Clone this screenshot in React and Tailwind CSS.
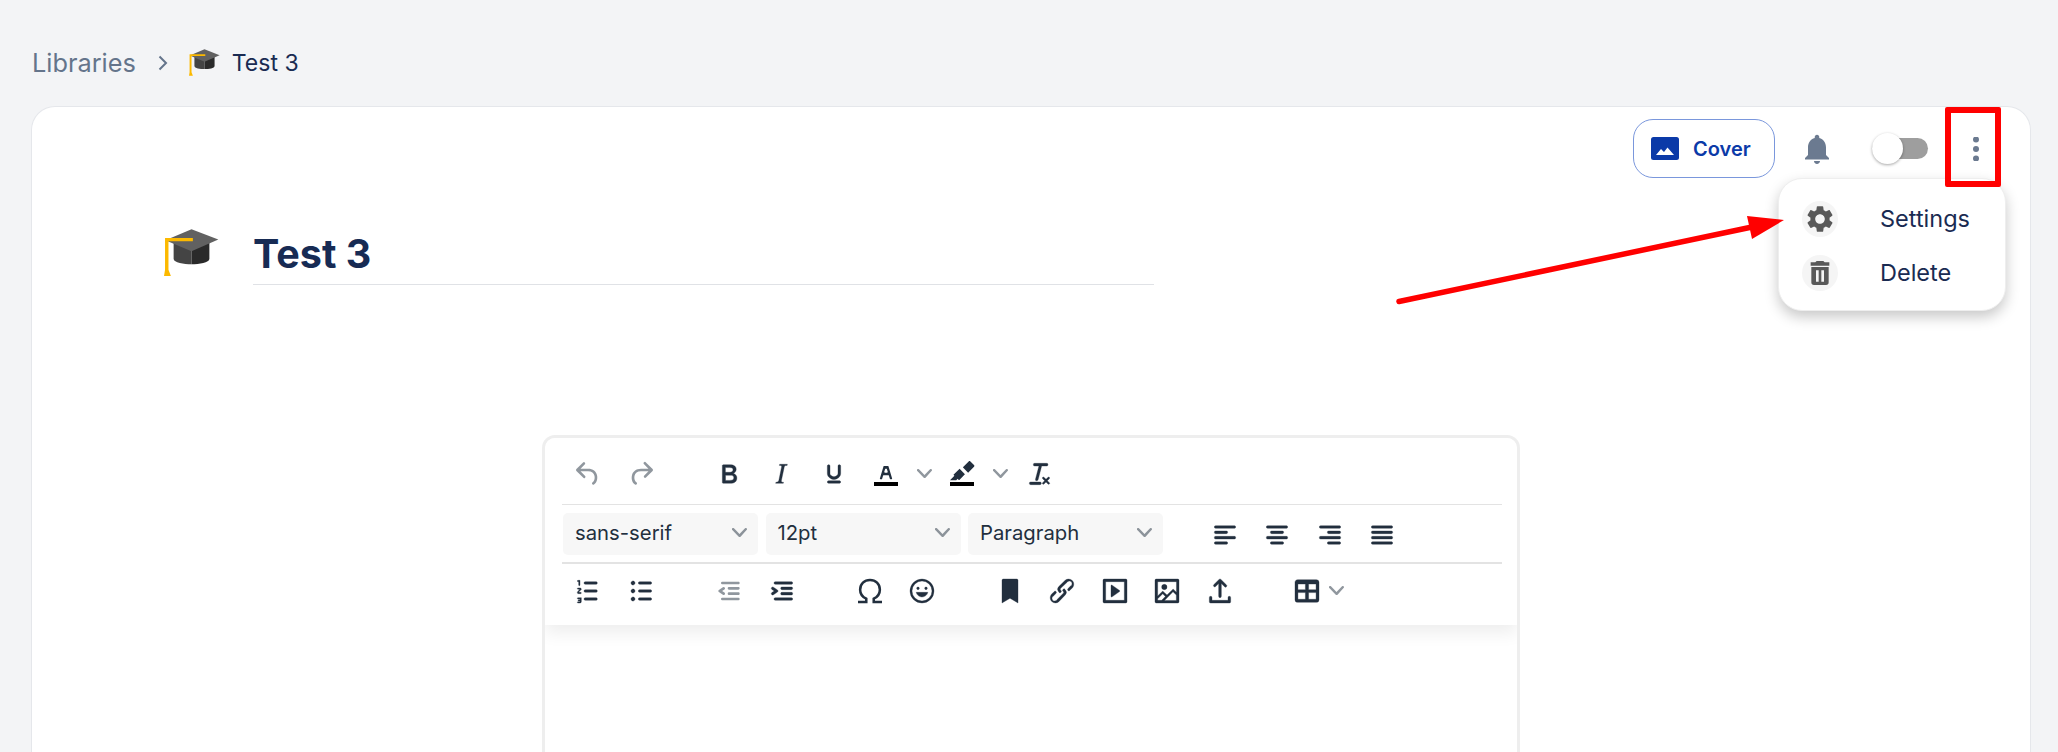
import React from "react";

const font = { fontFamily: "Inter, 'Liberation Sans', sans-serif" };

const P = {
    undo: "M6.4 8H12c3.7 0 6.2 2 6.8 5.1.6 2.7-.4 5.6-2.3 6.8a1 1 0 0 1-1-1.8c1.1-.6 1.8-2.7 1.4-4.6-.5-2.1-2.1-3.5-4.9-3.5H6.4l3.3 3.3a1 1 0 1 1-1.4 1.4l-5-5a1 1 0 0 1 0-1.4l5-5a1 1 0 0 1 1.4 1.4L6.4 8Z",
    redo: "M17.6 10H12c-2.8 0-4.4 1.4-4.9 3.5-.4 2 .3 4 1.4 4.6a1 1 0 1 1-1 1.8c-2-1.2-2.9-4.1-2.3-6.8.6-3 3-5.1 6.8-5.1h5.6l-3.3-3.3a1 1 0 1 1 1.4-1.4l5 5a1 1 0 0 1 0 1.4l-5 5a1 1 0 0 1-1.4-1.4l3.3-3.3Z",
    bold: "M7.8 19c-.3 0-.5 0-.6-.2l-.2-.5V5.7c0-.2 0-.4.2-.5l.6-.2h5c1.5 0 2.7.3 3.5 1 .7.6 1.1 1.4 1.1 2.5a3 3 0 0 1-.6 1.9c-.4.6-1 1-1.6 1.2.4.1.9.3 1.3.6s.8.7 1 1.2c.3.4.4 1 .4 1.6 0 1.3-.4 2.3-1.3 3-.8.7-2 1-3.7 1H7.8Zm5-8.3c.6 0 1.2-.1 1.6-.5.4-.3.6-.7.6-1.3 0-1.1-.8-1.7-2.3-1.7H9.3v3.5h3.4Zm.5 6c.7 0 1.3-.1 1.7-.4.4-.4.6-.9.6-1.5s-.2-1-.7-1.4c-.4-.3-1-.4-2-.4H9.4v3.8h4Z",
    italic: "M16.7 4.7l-.1.9h-.3c-.6 0-1 0-1.4.3-.3.3-.4.6-.5 1.1l-2.1 9.8v.6c0 .5.4.8 1.4.8h.2l-.2.8H8l.2-.8h.2c1.1 0 1.8-.5 2-1.5l2-9.8.1-.5c0-.6-.4-.8-1.4-.8h-.3l.2-.9h5.8Z",
    underline: "M16 5c.6 0 1 .4 1 1v5.5a4 4 0 0 1-.4 1.8l-1 1.4a5.3 5.3 0 0 1-5.5 1 5 5 0 0 1-1.6-1c-.5-.4-.8-.9-1.1-1.4a4 4 0 0 1-.4-1.8V6c0-.6.4-1 1-1s1 .4 1 1v5.5c0 .3 0 .6.2 1l.6.7a3.3 3.3 0 0 0 2.2.8 3.4 3.4 0 0 0 2.2-.8c.3-.2.4-.5.6-.8l.2-.9V6c0-.6.4-1 1-1ZM8 17h8c.6 0 1 .4 1 1s-.4 1-1 1H8a1 1 0 0 1 0-2Z",
    textColor: "M8.7 16h-.8a.5.5 0 0 1-.5-.6l2.7-9c.1-.3.3-.4.5-.4h2.8c.2 0 .4.1.5.4l2.7 9a.5.5 0 0 1-.5.6h-.8a.5.5 0 0 1-.4-.4l-.7-2.2c0-.3-.3-.4-.5-.4h-3.4c-.2 0-.4.1-.5.4l-.7 2.2c0 .3-.2.4-.4.4Zm2.6-7.6-.6 2a.5.5 0 0 0 .5.6h1.6a.5.5 0 0 0 .5-.6l-.6-2c0-.3-.3-.4-.5-.4h-.4c-.2 0-.4.1-.5.4Z",
    highlight: "M7.7 16.7H3l3.3-3.3-.7-.8L10.2 8l4 4.1-4 4.2c-.2.2-.6.2-.8 0l-.7-.7-1 1v.1Zm5-9.7L17 2.6c.4-.4.9-.4 1.3 0L21 5.3c.4.4.4 1 0 1.3l-4.4 4.4-4-4Z",
    clear: "M13.2 6a1 1 0 0 1 0 .2l-2.6 10a1 1 0 0 1-1 .8h-.2a.8.8 0 0 1-.8-1l2.6-10H8a1 1 0 1 1 0-2h9a1 1 0 0 1 0 2h-3.8ZM5 18h7a1 1 0 0 1 0 2H5a1 1 0 0 1 0-2Zm13 1.5L16.5 18 15 19.5a.7.7 0 0 1-1-1l1.5-1.5-1.5-1.5a.7.7 0 0 1 1-1l1.5 1.5 1.5-1.5a.7.7 0 0 1 1 1L17.5 17l1.5 1.5a.7.7 0 0 1-1 1Z",
    alignLeft: "M5 5h14c.6 0 1 .4 1 1s-.4 1-1 1H5a1 1 0 1 1 0-2Zm0 4h8c.6 0 1 .4 1 1s-.4 1-1 1H5a1 1 0 1 1 0-2Zm0 8h8c.6 0 1 .4 1 1s-.4 1-1 1H5a1 1 0 0 1 0-2Zm0-4h14c.6 0 1 .4 1 1s-.4 1-1 1H5a1 1 0 0 1 0-2Z",
    alignCenter: "M5 5h14c.6 0 1 .4 1 1s-.4 1-1 1H5a1 1 0 1 1 0-2Zm3 4h8c.6 0 1 .4 1 1s-.4 1-1 1H8a1 1 0 1 1 0-2Zm0 8h8c.6 0 1 .4 1 1s-.4 1-1 1H8a1 1 0 0 1 0-2Zm-3-4h14c.6 0 1 .4 1 1s-.4 1-1 1H5a1 1 0 0 1 0-2Z",
    alignRight: "M5 5h14c.6 0 1 .4 1 1s-.4 1-1 1H5a1 1 0 1 1 0-2Zm6 4h8c.6 0 1 .4 1 1s-.4 1-1 1h-8a1 1 0 0 1 0-2Zm0 8h8c.6 0 1 .4 1 1s-.4 1-1 1h-8a1 1 0 0 1 0-2Zm-6-4h14c.6 0 1 .4 1 1s-.4 1-1 1H5a1 1 0 0 1 0-2Z",
    justify: "M5 5h14c.6 0 1 .4 1 1s-.4 1-1 1H5a1 1 0 1 1 0-2Zm0 4h14c.6 0 1 .4 1 1s-.4 1-1 1H5a1 1 0 1 1 0-2Zm0 4h14c.6 0 1 .4 1 1s-.4 1-1 1H5a1 1 0 0 1 0-2Zm0 4h14c.6 0 1 .4 1 1s-.4 1-1 1H5a1 1 0 0 1 0-2Z",
    numList: "M10 17h8c.6 0 1 .4 1 1s-.4 1-1 1h-8a1 1 0 0 1 0-2Zm0-6h8c.6 0 1 .4 1 1s-.4 1-1 1h-8a1 1 0 0 1 0-2Zm0-6h8c.6 0 1 .4 1 1s-.4 1-1 1h-8a1 1 0 1 1 0-2ZM6 4v3.5c0 .3-.2.5-.5.5a.5.5 0 0 1-.5-.5V5h-.5a.5.5 0 0 1 0-1H6Zm-1 8.8.2.2h1.3c.3 0 .5.2.5.5s-.2.5-.5.5H4.9a.9.9 0 0 1-.9-.9c0-.2 0-.4.2-.5l1.6-1.9H4.5a.5.5 0 0 1 0-1h1.6c.5 0 .9.4.9.9 0 .2 0 .4-.2.5L5 12.8ZM7 17v3c0 .6-.4 1-1 1H4.5a.5.5 0 0 1 0-1H6v-.5H5a.5.5 0 0 1 0-1h1V18H4.5a.5.5 0 0 1 0-1H6c.6 0 1 0 1 0Z",
    bullList: "M11 5h8c.6 0 1 .4 1 1s-.4 1-1 1h-8a1 1 0 0 1 0-2Zm0 6h8c.6 0 1 .4 1 1s-.4 1-1 1h-8a1 1 0 0 1 0-2Zm0 6h8c.6 0 1 .4 1 1s-.4 1-1 1h-8a1 1 0 0 1 0-2ZM4.5 6c0-.4.1-.8.4-1 .3-.4.7-.5 1.1-.5s.8.1 1 .4c.4.3.5.7.5 1.1s-.1.8-.4 1c-.3.4-.7.5-1.1.5s-.8-.1-1-.4c-.4-.3-.5-.7-.5-1.1Zm0 6c0-.4.1-.8.4-1 .3-.4.7-.5 1.1-.5s.8.1 1 .4c.4.3.5.7.5 1.1s-.1.8-.4 1c-.3.4-.7.5-1.1.5s-.8-.1-1-.4c-.4-.3-.5-.7-.5-1.1Zm0 6c0-.4.1-.8.4-1 .3-.4.7-.5 1.1-.5s.8.1 1 .4c.4.3.5.7.5 1.1s-.1.8-.4 1c-.3.4-.7.5-1.1.5s-.8-.1-1-.4c-.4-.3-.5-.7-.5-1.1Z",
    outdent: "M7 5h12c.6 0 1 .4 1 1s-.4 1-1 1H7a1 1 0 1 1 0-2Zm5 4h7c.6 0 1 .4 1 1s-.4 1-1 1h-7a1 1 0 0 1 0-2Zm0 4h7c.6 0 1 .4 1 1s-.4 1-1 1h-7a1 1 0 0 1 0-2Zm-5 4h12a1 1 0 0 1 0 2H7a1 1 0 0 1 0-2Zm1.6-3.8a1 1 0 0 1-1.2 1.6l-3-2a1 1 0 0 1 0-1.6l3-2a1 1 0 0 1 1.2 1.6L6.8 12l1.8 1.2Z",
    indent: "M7 5h12c.6 0 1 .4 1 1s-.4 1-1 1H7a1 1 0 1 1 0-2Zm5 4h7c.6 0 1 .4 1 1s-.4 1-1 1h-7a1 1 0 0 1 0-2Zm0 4h7c.6 0 1 .4 1 1s-.4 1-1 1h-7a1 1 0 0 1 0-2Zm-5 4h12a1 1 0 0 1 0 2H7a1 1 0 0 1 0-2Zm-2.6-3.8L6.2 12l-1.8-1.2a1 1 0 0 1 1.2-1.6l3 2a1 1 0 0 1 0 1.6l-3 2a1 1 0 1 1-1.2-1.6Z",
    emoji: "M9 11c.6 0 1-.4 1-1s-.4-1-1-1a1 1 0 0 0-1 1c0 .6.4 1 1 1Zm6 0c.6 0 1-.4 1-1s-.4-1-1-1a1 1 0 0 0-1 1c0 .6.4 1 1 1Zm-3 5.5c2.1 0 4-1.5 4.4-3.5H7.6c.5 2 2.3 3.5 4.4 3.5ZM12 3a9 9 0 1 0 0 18 9 9 0 0 0 0-18Zm0 16.5a7.5 7.5 0 1 1 0-15 7.5 7.5 0 0 1 0 15Z",
    bookmark: "M6 4a1 1 0 0 1 1-1h10a1 1 0 0 1 1 1v17l-6-3.6L6 21V4Z",
    link: "M6.2 12.3a1 1 0 0 1 1.4 1.4l-2 2a2 2 0 1 0 2.6 2.8l4.8-4.8a1 1 0 0 0 0-1.4 1 1 0 1 1 1.4-1.3 2.9 2.9 0 0 1 0 4L9.6 20a3.9 3.9 0 0 1-5.5-5.5l2-2Zm11.6-.6a1 1 0 0 1-1.4-1.4l2-2a2 2 0 1 0-2.6-2.8L11 10a1 1 0 0 0 0 1.4 1 1 0 1 1-1.4 1.3 2.9 2.9 0 0 1 0-4L14.4 4a3.9 3.9 0 0 1 5.5 5.5l-2 2Z",
    embed: "M4 3h16c.6 0 1 .4 1 1v16c0 .6-.4 1-1 1H4a1 1 0 0 1-1-1V4c0-.6.4-1 1-1Zm1 2v14h14V5H5Zm4.8 2.6 5.6 4a.5.5 0 0 1 0 .8l-5.6 4A.5.5 0 0 1 9 16V8a.5.5 0 0 1 .8-.4Z",
    image: "M5 15.7l3.3-3.2c.3-.3.7-.3 1 0L12 15l4.1-4c.3-.4.8-.4 1 0l2 1.9V5H5v10.7ZM5 18v1h3l2.8-2.9-2-2L5 17.9V18Zm14-3-2.5-2.4-6.4 6.5H19V15ZM4 3h16c.6 0 1 .4 1 1v16c0 .6-.4 1-1 1H4a1 1 0 0 1-1-1V4c0-.6.4-1 1-1Zm6 8a2 2 0 1 0 0-4 2 2 0 0 0 0 4Z",
    upload: "M18 19v-2a1 1 0 0 1 2 0v3c0 .6-.4 1-1 1H5a1 1 0 0 1-1-1v-3a1 1 0 0 1 2 0v2h12ZM11 6.4 8.7 8.7a1 1 0 0 1-1.4-1.4l4-4a1 1 0 0 1 1.4 0l4 4a1 1 0 1 1-1.4 1.4L13 6.4V16a1 1 0 0 1-2 0V6.4Z",
    table: "M19 3.5a2 2 0 0 1 2 2v13a2 2 0 0 1-2 2H5a2 2 0 0 1-2-2v-13c0-1.1.9-2 2-2h14ZM5.2 13.2v5h5.6v-5H5.2Zm8 0v5h5.6v-5h-5.6Zm0-6.4v4.2h5.6V6.8h-5.6Zm-8 0V11h5.6V6.8H5.2Z",
    bell: "M12 22c1.1 0 2-.9 2-2h-4c0 1.1.89 2 2 2zm6-6v-5c0-3.07-1.64-5.64-4.5-6.32V4c0-.83-.67-1.5-1.5-1.5s-1.5.67-1.5 1.5v.68C7.63 5.36 6 7.92 6 11v5l-2 2v1h16v-1l-2-2z",
    gear: "M19.14 12.94c.04-.3.06-.61.06-.94 0-.32-.02-.64-.07-.94l2.03-1.58c.18-.14.23-.41.12-.61l-1.92-3.32c-.12-.22-.37-.29-.59-.22l-2.39.96c-.5-.38-1.03-.7-1.62-.94l-.36-2.54c-.04-.24-.24-.41-.48-.41h-3.84c-.24 0-.43.17-.47.41l-.36 2.54c-.59.24-1.13.57-1.62.94l-2.39-.96c-.22-.08-.47 0-.59.22L2.74 8.87c-.12.21-.08.47.12.61l2.03 1.58c-.05.3-.09.63-.09.94s.02.64.07.94l-2.03 1.58c-.18.14-.23.41-.12.61l1.92 3.32c.12.22.37.29.59.22l2.39-.96c.5.38 1.03.7 1.62.94l.36 2.54c.05.24.24.41.48.41h3.84c.24 0 .44-.17.47-.41l.36-2.54c.59-.24 1.13-.56 1.62-.94l2.39.96c.22.08.47 0 .59-.22l1.92-3.32c.12-.22.07-.47-.12-.61l-2.01-1.58zM12 15.6c-1.98 0-3.6-1.62-3.6-3.6s1.62-3.6 3.6-3.6 3.6 1.62 3.6 3.6-1.62 3.6-3.6 3.6z",
    trash: "M9.5 3h5l1 1H19v2.5H5V4h3.5l1-1ZM5.5 7.5h13V19a2 2 0 0 1-2 2h-9a2 2 0 0 1-2-2V7.5ZM9 10v8.5h2V10H9Zm4 0v8.5h2V10h-2Z",
};

function GradCap({ className }) {
    return (
        <svg viewBox="0 0 160 136" className={className}>
            <path d="M28 40h52v62c-22 0-52-4-52-16Z" fill="#444" />
            <path d="M80 40h52v46c0 12-30 16-52 16Z" fill="#2a2a2a" />
            <path d="M4 32 80 0l78 30-78 34Z" fill="#616161" />
            <path d="M84 26H3v92l-3 18h20l-7-18V35h71Z" fill="#fcb900" />
        </svg>
    );
}

function Icon({ d, dim, size = "size-8" }) {
    return (
        <svg viewBox="0 0 24 24" className={`${size} ${dim ? "fill-[#222f3e]/50" : "fill-[#222f3e] stroke-[#222f3e] stroke-[0.25]"}`}>
            <path d={d} fillRule="nonzero" />
        </svg>
    );
}

function Btn({ d, dim, children }) {
    return <div className="w-[52.5px] h-8 flex items-center justify-center">{children || <Icon d={d} dim={dim} />}</div>;
}

function Chevron({ className = "" }) {
    return (
        <svg viewBox="0 0 10 10" className={`size-[15px] fill-[#222f3e]/50 ${className}`}>
            <path d="M8.7 2.2c.3-.3.8-.3 1 0 .4.4.4.9 0 1.2L5.7 7.8c-.3.3-.9.3-1.2 0L.2 3.4a.8.8 0 0 1 0-1.2c.3-.3.8-.3 1.1 0L5 6l3.7-3.8Z" />
        </svg>
    );
}

function ColorBtn({ d }) {
    return (
        <div className="flex items-center w-[76px]">
            <Btn>
                <svg viewBox="0 0 24 24" className="size-8 fill-[#222f3e]">
                    <path d="M3 18h18v3H3z" fill="#000" />
                    <path d={d} />
                </svg>
            </Btn>
            <Chevron className="ml-[4px]" />
        </div>
    );
}

function Select({ label }) {
    return (
        <div className="w-[195px] h-[42px] rounded-[5px] bg-[#f7f7f7] flex items-center justify-between pl-[12px] pr-[11px] text-[20.3px] text-[#222f3e]">
            <span>{label}</span>
            <Chevron className="-mt-[2px]" />
        </div>
    );
}

function MenuItem({ d, label }) {
    return (
        <div className="h-[54px] flex items-center pl-[23px] gap-[42px]">
            <div className="size-9 rounded-full bg-[#f5f5f5] flex items-center justify-center">
                <svg viewBox="0 0 24 24" className="size-8 shrink-0 fill-[#595959]">
                    <path d={d} />
                </svg>
            </div>
            <span className="text-[23.5px] text-[#1a2b52]">{label}</span>
        </div>
    );
}

export default function App() {
    return (
        <div style={font} className="relative h-[752px] overflow-hidden bg-[#f3f4f6] flex flex-col pl-[31px] pr-[27px]">
            <div className="h-[106px] shrink-0 flex items-center pt-[20px] pl-px">
                <span className="text-[25.3px] text-[#64748b]">Libraries</span>
                <svg viewBox="0 0 10 16" className="w-[10px] h-4 ml-[22px] fill-none stroke-[#64748b] stroke-2">
                    <path d="M1.5 1.5 8 8l-6.5 6.5" />
                </svg>
                <GradCap className="w-[31px] h-[27px] ml-[21px] -mt-[2px]" />
                <span className="text-[23px] text-[#1a2b52] ml-[12px]">Test 3</span>
            </div>

            <div className="relative flex-1 flex flex-col bg-white border border-b-0 border-[#e5e7eb] rounded-t-[24px] pl-px">
                <div className="flex justify-end items-center h-[59px] mt-3 pr-[42px] shrink-0">
                    <div className="w-[142px] h-[59px] rounded-[20px] border border-[#7a97dc] flex items-center pl-[17px] gap-[14px]">
                        <svg viewBox="0 0 28 23" className="w-[28px] h-[23px]">
                            <rect width="28" height="23" rx="2.5" fill="#0b3aa8" />
                            <path d="M5 18l5-6 3 3 3.5-4.5L23 18Z" fill="#fff" />
                        </svg>
                        <span className="text-[20px] font-semibold text-[#0b3aa8]">Cover</span>
                    </div>
                    <svg viewBox="0 0 24 24" className="size-9 ml-[24px] fill-[#6b7a90]">
                        <path d={P.bell} />
                    </svg>
                    <div className="relative ml-[37px] w-[56px] h-[21px] rounded-full bg-[#9e9e9e] flex items-center">
                        <div className="size-[31px] rounded-full bg-white shadow-[0_1px_3px_rgba(0,0,0,0.35)]"></div>
                    </div>
                    <svg viewBox="0 0 24 24" className="size-6 ml-[36px] fill-[#6b7a90]">
                        <circle cx="12" cy="2.5" r="3" />
                        <circle cx="12" cy="12" r="3" />
                        <circle cx="12" cy="21.5" r="3" />
                    </svg>
                </div>

                <div className="absolute right-[24px] top-[71px] w-[228px] h-[133px] z-10 bg-white rounded-[24px] border border-[#eeeeee] shadow-[0_6px_14px_rgba(0,0,0,0.22)] pt-[13px]">
                    <MenuItem d={P.gear} label="Settings" />
                    <MenuItem d={P.trash} label="Delete" />
                </div>

                <div className="flex mt-[44px] pl-[131px] shrink-0">
                    <GradCap className="w-[55px] h-[47px] mt-[7px]" />
                    <div className="w-[901px] ml-[34px] h-[63px] border-b border-[#e0e2e6] text-[39.5px] leading-[64px] font-bold text-[#172b54]">Test 3</div>
                </div>

                <div className="flex-1 ml-[509px] mt-[150px] w-[978px] border-[3px] border-b-0 border-[#eeeeee] rounded-t-[13px] overflow-hidden">
                    <div className="shadow-[0_8px_16px_rgba(0,0,0,0.07)] pl-[17px] pr-[15px] bg-white">
                        <div className="h-[67px] flex items-center pt-[5px] border-b border-[#e3e3e3]">
                            <Btn d={P.undo} dim />
                            <Btn d={P.redo} dim />
                            <div className="w-[35.5px]"></div>
                            <Btn d={P.bold} />
                            <Btn d={P.italic} />
                            <Btn d={P.underline} />
                            <ColorBtn d={P.textColor} />
                            <ColorBtn d={P.highlight} />
                            <div className="ml-[2px]">
                                <Btn d={P.clear} />
                            </div>
                        </div>
                        <div className="h-[59px] flex items-center gap-[7.5px] border-b-2 border-[#e3e3e3] pl-px">
                            <Select label="sans-serif" />
                            <Select label="12pt" />
                            <Select label="Paragraph" />
                            <div className="flex mt-[3px] ml-[28px]">
                                <Btn d={P.alignLeft} />
                                <Btn d={P.alignCenter} />
                                <Btn d={P.alignRight} />
                                <Btn d={P.justify} />
                            </div>
                        </div>
                        <div className="h-[61px] flex items-center pb-[8px]">
                            <Btn d={P.numList} />
                            <Btn d={P.bullList} />
                            <div className="w-[36px]"></div>
                            <Btn d={P.outdent} dim />
                            <Btn d={P.indent} />
                            <div className="w-[35.5px]"></div>
                            <Btn>
                                <svg viewBox="0 0 24 24" className="size-8 fill-none stroke-[#222f3e] stroke-[1.9]">
                                    <path d="M3 20.2h6.2v-2.4C6.6 16.5 4.6 14.2 4.6 11c0-4.5 3.2-7.3 7.4-7.3s7.4 2.8 7.4 7.3c0 3.2-2 5.5-4.6 6.8v2.4H21" />
                                </svg>
                            </Btn>
                            <Btn d={P.emoji} />
                            <div className="w-[35px]"></div>
                            <Btn d={P.bookmark} />
                            <Btn d={P.link} />
                            <Btn d={P.embed} />
                            <Btn d={P.image} />
                            <Btn d={P.upload} />
                            <div className="w-[35px]"></div>
                            <Btn d={P.table} />
                            <Chevron className="-ml-[5px]" />
                        </div>
                    </div>
                </div>
            </div>

            {/* annotation drawn over the screenshot */}
            <div className="absolute left-[1945px] top-[107px] w-[56px] h-[80px] z-20 border-[6px] border-[#ff0000] rounded-[2px]"></div>
            <svg className="absolute left-[1390px] top-[205px] z-20" width="400" height="105" viewBox="1390 205 400 105">
                <path d="M1399 301.5 1752 227" stroke="#ff0000" strokeWidth="5.5" strokeLinecap="round" fill="none" />
                <path d="M1784 220 1747 216 1752 239Z" fill="#ff0000" />
            </svg>
        </div>
    );
}
